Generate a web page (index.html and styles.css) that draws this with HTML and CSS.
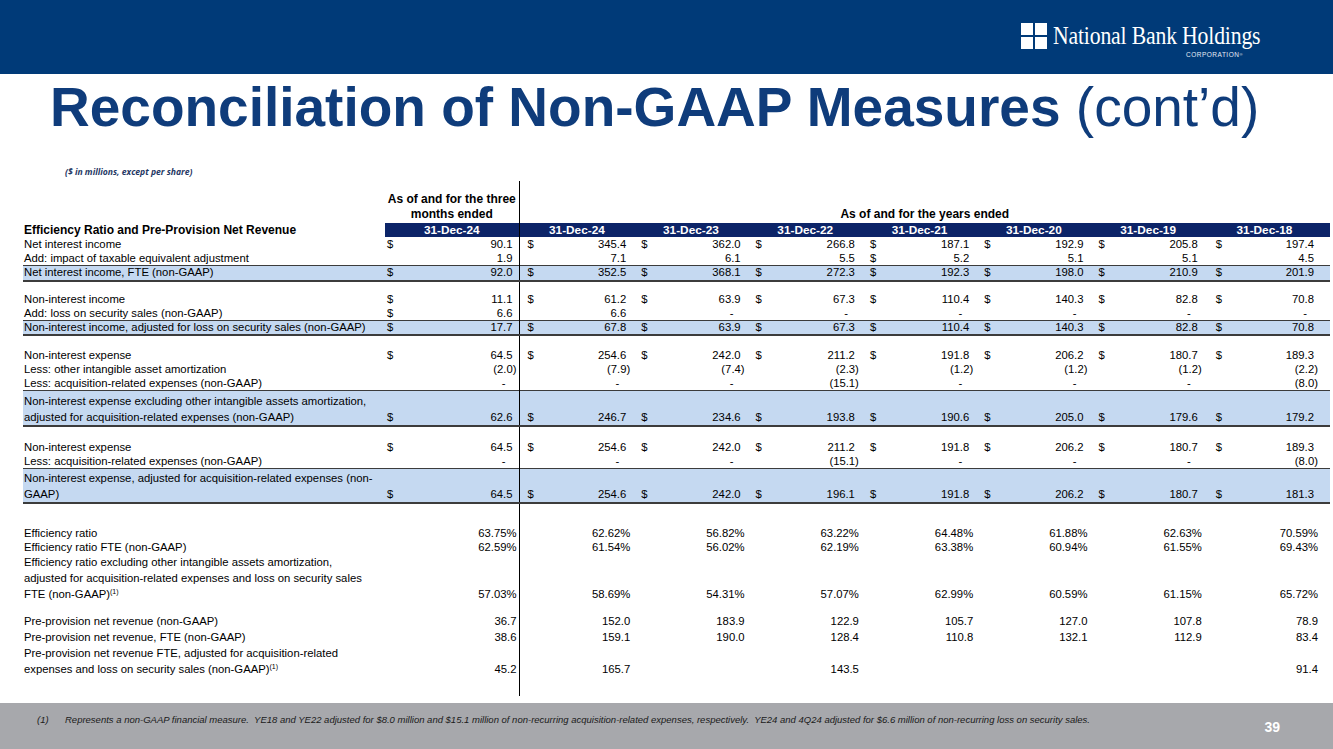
FILE: index.html
```html
<!DOCTYPE html>
<html lang="en">
<head>
<meta charset="utf-8">
<title>Reconciliation of Non-GAAP Measures (cont'd)</title>
<link rel="stylesheet" href="styles.css">
</head>
<body>
<header class="topbar">
  <div class="logo">
    <svg class="mark" width="26" height="26" viewBox="0 0 26 26" aria-hidden="true">
      <rect x="0" y="0" width="12" height="12" fill="#fff"/>
      <rect x="14" y="0" width="12" height="12" fill="#fff"/>
      <rect x="0" y="14" width="12" height="12" fill="#fff"/>
      <rect x="14" y="14" width="12" height="12" fill="#fff"/>
    </svg>
    <div class="brand">
      <div class="name">National Bank Holdings</div>
      <div class="corp">CORPORATION<sup>®</sup></div>
    </div>
  </div>
</header>

<main class="main">
  <h1 class="title">Reconciliation of Non-GAAP Measures <span class="light">(cont’d)</span></h1>
  <p class="unit">($ in millions, except per share)</p>

  <table class="fin">
    <colgroup>
      <col class="c-lab"><col class="c-q"><col class="c-y"><col class="c-y"><col class="c-y"><col class="c-y"><col class="c-y"><col class="c-y"><col class="c-y7">
    </colgroup>
    <tr class="top">
      <td></td>
      <td class="q hd">As of and for the three<br>months ended</td>
      <td class="y1 hd" colspan="7">As of and for the years ended</td>
    </tr>
    <tr class="r head">
      <td class="lab b">Efficiency Ratio and Pre-Provision Net Revenue</td>
      <td class="q nv">31-Dec-24</td>
      <td class="y y1 nv">31-Dec-24</td><td class="y nv">31-Dec-23</td><td class="y nv">31-Dec-22</td><td class="y nv">31-Dec-21</td><td class="y nv">31-Dec-20</td><td class="y nv">31-Dec-19</td><td class="y y7 nv">31-Dec-18</td>
    </tr>
    <tr class="r">
      <td class="lab">Net interest income</td>
      <td class="q"><span class="d">$</span><span class="p">90.1</span></td>
      <td class="y y1"><span class="d">$</span><span class="p">345.4</span></td>
      <td class="y"><span class="d">$</span><span class="p">362.0</span></td>
      <td class="y"><span class="d">$</span><span class="p">266.8</span></td>
      <td class="y"><span class="d">$</span><span class="p">187.1</span></td>
      <td class="y"><span class="d">$</span><span class="p">192.9</span></td>
      <td class="y"><span class="d">$</span><span class="p">205.8</span></td>
      <td class="y y7"><span class="d">$</span><span class="p">197.4</span></td>
    </tr>
    <tr class="r">
      <td class="lab">Add: impact of taxable equivalent adjustment</td>
      <td class="q"><span class="p">1.9</span></td>
      <td class="y y1"><span class="p">7.1</span></td>
      <td class="y"><span class="p">6.1</span></td>
      <td class="y"><span class="p">5.5</span></td>
      <td class="y"><span class="d">$</span><span class="p">5.2</span></td>
      <td class="y"><span class="p">5.1</span></td>
      <td class="y"><span class="p">5.1</span></td>
      <td class="y y7"><span class="p">4.5</span></td>
    </tr>
    <tr class="r hl">
      <td class="lab">Net interest income, FTE (non-GAAP)</td>
      <td class="q"><span class="d">$</span><span class="p">92.0</span></td>
      <td class="y y1"><span class="d">$</span><span class="p">352.5</span></td>
      <td class="y"><span class="d">$</span><span class="p">368.1</span></td>
      <td class="y"><span class="d">$</span><span class="p">272.3</span></td>
      <td class="y"><span class="d">$</span><span class="p">192.3</span></td>
      <td class="y"><span class="d">$</span><span class="p">198.0</span></td>
      <td class="y"><span class="d">$</span><span class="p">210.9</span></td>
      <td class="y y7"><span class="d">$</span><span class="p">201.9</span></td>
    </tr>
    <tr class="g g11"><td></td><td></td><td class="y1"></td><td></td><td></td><td></td><td></td><td></td><td></td></tr>
    <tr class="r">
      <td class="lab">Non-interest income</td>
      <td class="q"><span class="d">$</span><span class="p">11.1</span></td>
      <td class="y y1"><span class="d">$</span><span class="p">61.2</span></td>
      <td class="y"><span class="d">$</span><span class="p">63.9</span></td>
      <td class="y"><span class="d">$</span><span class="p">67.3</span></td>
      <td class="y"><span class="d">$</span><span class="p">110.4</span></td>
      <td class="y"><span class="d">$</span><span class="p">140.3</span></td>
      <td class="y"><span class="d">$</span><span class="p">82.8</span></td>
      <td class="y y7"><span class="d">$</span><span class="p">70.8</span></td>
    </tr>
    <tr class="r">
      <td class="lab">Add: loss on security sales (non-GAAP)</td>
      <td class="q"><span class="d">$</span><span class="p">6.6</span></td>
      <td class="y y1"><span class="p">6.6</span></td>
      <td class="y"><span class="z">-</span></td>
      <td class="y"><span class="z">-</span></td>
      <td class="y"><span class="z">-</span></td>
      <td class="y"><span class="z">-</span></td>
      <td class="y"><span class="z">-</span></td>
      <td class="y y7"><span class="z">-</span></td>
    </tr>
    <tr class="r hl">
      <td class="lab">Non-interest income, adjusted for loss on security sales (non-GAAP)</td>
      <td class="q"><span class="d">$</span><span class="p">17.7</span></td>
      <td class="y y1"><span class="d">$</span><span class="p">67.8</span></td>
      <td class="y"><span class="d">$</span><span class="p">63.9</span></td>
      <td class="y"><span class="d">$</span><span class="p">67.3</span></td>
      <td class="y"><span class="d">$</span><span class="p">110.4</span></td>
      <td class="y"><span class="d">$</span><span class="p">140.3</span></td>
      <td class="y"><span class="d">$</span><span class="p">82.8</span></td>
      <td class="y y7"><span class="d">$</span><span class="p">70.8</span></td>
    </tr>
    <tr class="g g13"><td></td><td></td><td class="y1"></td><td></td><td></td><td></td><td></td><td></td><td></td></tr>
    <tr class="r">
      <td class="lab">Non-interest expense</td>
      <td class="q"><span class="d">$</span><span class="p">64.5</span></td>
      <td class="y y1"><span class="d">$</span><span class="p">254.6</span></td>
      <td class="y"><span class="d">$</span><span class="p">242.0</span></td>
      <td class="y"><span class="d">$</span><span class="p">211.2</span></td>
      <td class="y"><span class="d">$</span><span class="p">191.8</span></td>
      <td class="y"><span class="d">$</span><span class="p">206.2</span></td>
      <td class="y"><span class="d">$</span><span class="p">180.7</span></td>
      <td class="y y7"><span class="d">$</span><span class="p">189.3</span></td>
    </tr>
    <tr class="r">
      <td class="lab">Less: other intangible asset amortization</td>
      <td class="q">(2.0)</td>
      <td class="y y1">(7.9)</td>
      <td class="y">(7.4)</td>
      <td class="y">(2.3)</td>
      <td class="y">(1.2)</td>
      <td class="y">(1.2)</td>
      <td class="y">(1.2)</td>
      <td class="y y7">(2.2)</td>
    </tr>
    <tr class="r">
      <td class="lab">Less: acquisition-related expenses (non-GAAP)</td>
      <td class="q"><span class="z">-</span></td>
      <td class="y y1"><span class="z">-</span></td>
      <td class="y"><span class="z">-</span></td>
      <td class="y">(15.1)</td>
      <td class="y"><span class="z">-</span></td>
      <td class="y"><span class="z">-</span></td>
      <td class="y"><span class="z">-</span></td>
      <td class="y y7">(8.0)</td>
    </tr>
    <tr class="hl two">
      <td class="lab">Non-interest expense excluding other intangible assets amortization,<br>adjusted for acquisition-related expenses (non-GAAP)</td>
      <td class="q"><span class="d">$</span><span class="p">62.6</span></td>
      <td class="y y1"><span class="d">$</span><span class="p">246.7</span></td>
      <td class="y"><span class="d">$</span><span class="p">234.6</span></td>
      <td class="y"><span class="d">$</span><span class="p">193.8</span></td>
      <td class="y"><span class="d">$</span><span class="p">190.6</span></td>
      <td class="y"><span class="d">$</span><span class="p">205.0</span></td>
      <td class="y"><span class="d">$</span><span class="p">179.6</span></td>
      <td class="y y7"><span class="d">$</span><span class="p">179.2</span></td>
    </tr>
    <tr class="g g14"><td></td><td></td><td class="y1"></td><td></td><td></td><td></td><td></td><td></td><td></td></tr>
    <tr class="r">
      <td class="lab">Non-interest expense</td>
      <td class="q"><span class="d">$</span><span class="p">64.5</span></td>
      <td class="y y1"><span class="d">$</span><span class="p">254.6</span></td>
      <td class="y"><span class="d">$</span><span class="p">242.0</span></td>
      <td class="y"><span class="d">$</span><span class="p">211.2</span></td>
      <td class="y"><span class="d">$</span><span class="p">191.8</span></td>
      <td class="y"><span class="d">$</span><span class="p">206.2</span></td>
      <td class="y"><span class="d">$</span><span class="p">180.7</span></td>
      <td class="y y7"><span class="d">$</span><span class="p">189.3</span></td>
    </tr>
    <tr class="r">
      <td class="lab">Less: acquisition-related expenses (non-GAAP)</td>
      <td class="q"><span class="z">-</span></td>
      <td class="y y1"><span class="z">-</span></td>
      <td class="y"><span class="z">-</span></td>
      <td class="y">(15.1)</td>
      <td class="y"><span class="z">-</span></td>
      <td class="y"><span class="z">-</span></td>
      <td class="y"><span class="z">-</span></td>
      <td class="y y7">(8.0)</td>
    </tr>
    <tr class="hl two">
      <td class="lab">Non-interest expense, adjusted for acquisition-related expenses (non-<br>GAAP)</td>
      <td class="q"><span class="d">$</span><span class="p">64.5</span></td>
      <td class="y y1"><span class="d">$</span><span class="p">254.6</span></td>
      <td class="y"><span class="d">$</span><span class="p">242.0</span></td>
      <td class="y"><span class="d">$</span><span class="p">196.1</span></td>
      <td class="y"><span class="d">$</span><span class="p">191.8</span></td>
      <td class="y"><span class="d">$</span><span class="p">206.2</span></td>
      <td class="y"><span class="d">$</span><span class="p">180.7</span></td>
      <td class="y y7"><span class="d">$</span><span class="p">181.3</span></td>
    </tr>
    <tr class="g g23"><td></td><td></td><td class="y1"></td><td></td><td></td><td></td><td></td><td></td><td></td></tr>
    <tr class="r">
      <td class="lab">Efficiency ratio</td>
      <td class="q">63.75%</td>
      <td class="y y1">62.62%</td>
      <td class="y">56.82%</td>
      <td class="y">63.22%</td>
      <td class="y">64.48%</td>
      <td class="y">61.88%</td>
      <td class="y">62.63%</td>
      <td class="y y7">70.59%</td>
    </tr>
    <tr class="r">
      <td class="lab">Efficiency ratio FTE (non-GAAP)</td>
      <td class="q">62.59%</td>
      <td class="y y1">61.54%</td>
      <td class="y">56.02%</td>
      <td class="y">62.19%</td>
      <td class="y">63.38%</td>
      <td class="y">60.94%</td>
      <td class="y">61.55%</td>
      <td class="y y7">69.43%</td>
    </tr>
    <tr class="multi">
      <td class="lab">Efficiency ratio excluding other intangible assets amortization,<br>adjusted for acquisition-related expenses and loss on security sales<br>FTE (non-GAAP)<sup class="fn">(1)</sup></td>
      <td class="q">57.03%</td>
      <td class="y y1">58.69%</td>
      <td class="y">54.31%</td>
      <td class="y">57.07%</td>
      <td class="y">62.99%</td>
      <td class="y">60.59%</td>
      <td class="y">61.15%</td>
      <td class="y y7">65.72%</td>
    </tr>
    <tr class="g g11"><td></td><td></td><td class="y1"></td><td></td><td></td><td></td><td></td><td></td><td></td></tr>
    <tr class="r16">
      <td class="lab">Pre-provision net revenue (non-GAAP)</td>
      <td class="q">36.7</td>
      <td class="y y1">152.0</td>
      <td class="y">183.9</td>
      <td class="y">122.9</td>
      <td class="y">105.7</td>
      <td class="y">127.0</td>
      <td class="y">107.8</td>
      <td class="y y7">78.9</td>
    </tr>
    <tr class="r16">
      <td class="lab">Pre-provision net revenue, FTE (non-GAAP)</td>
      <td class="q">38.6</td>
      <td class="y y1">159.1</td>
      <td class="y">190.0</td>
      <td class="y">128.4</td>
      <td class="y">110.8</td>
      <td class="y">132.1</td>
      <td class="y">112.9</td>
      <td class="y y7">83.4</td>
    </tr>
    <tr class="multi">
      <td class="lab">Pre-provision net revenue FTE, adjusted for acquisition-related<br>expenses and loss on security sales (non-GAAP)<sup class="fn">(1)</sup></td>
      <td class="q">45.2</td>
      <td class="y y1">165.7</td>
      <td class="y"></td>
      <td class="y">143.5</td>
      <td class="y"></td>
      <td class="y"></td>
      <td class="y"></td>
      <td class="y y7">91.4</td>
    </tr>
    <tr class="g g19"><td></td><td></td><td class="y1"></td><td></td><td></td><td></td><td></td><td></td><td></td></tr>
  </table>
</main>

<footer class="foot">
  <div class="note">
    <span class="nref">(1)</span>
    <span class="ntext">Represents a non-GAAP financial measure.&nbsp; YE18 and YE22 adjusted for $8.0 million and $15.1 million of non-recurring acquisition-related expenses, respectively.&nbsp; YE24 and 4Q24 adjusted for $6.6 million of non-recurring loss on security sales.</span>
  </div>
  <div class="page">39</div>
</footer>
</body>
</html>
```

FILE: styles.css
```css
* { box-sizing: border-box; }

html, body {
  margin: 0;
  padding: 0;
}

body {
  width: 1333px;
  height: 749px;
  overflow: hidden;
  display: flex;
  flex-direction: column;
  background: #ffffff;
  font-family: "Liberation Sans", Arial, sans-serif;
  color: #000;
}

/* ---------- top bar ---------- */
.topbar {
  height: 74px;
  flex: none;
  background: #003a78;
  padding: 23px 0 0 1021px;
}

.logo {
  display: flex;
  align-items: flex-start;
  gap: 6px;
}

.mark { display: block; flex: none; }

.brand {
  display: flex;
  flex-direction: column;
}

.name {
  font-family: "Liberation Serif", "Times New Roman", serif;
  font-size: 26px;
  line-height: 26px;
  color: #fff;
  white-space: nowrap;
  transform: scaleX(0.835);
  transform-origin: left top;
  letter-spacing: -0.2px;
}

.corp {
  margin: 2px 0 0 133px;
  font-size: 6.5px;
  line-height: 7px;
  letter-spacing: 0.5px;
  color: #e6ecf5;
  white-space: nowrap;
}

.corp sup {
  font-size: 4px;
  vertical-align: top;
}

/* ---------- main ---------- */
.main {
  flex: 1;
}

.title {
  margin: 6px 0 0;
  padding-left: 50px;
  font-size: 55px;
  line-height: 55px;
  font-weight: bold;
  color: #0f3c7b;
  white-space: nowrap;
}

.title .light { font-weight: normal; }

.unit {
  margin: 31px 0 0 65px;
  font-family: "Open Sans", "Liberation Sans", sans-serif;
  font-style: italic;
  font-weight: bold;
  font-size: 8.6px;
  line-height: 12px;
  color: #1f3864;
}

/* ---------- table ---------- */
.fin {
  margin: 3px 0 0 23px;
  width: 1307px;
  table-layout: fixed;
  border-collapse: collapse;
  font-size: 11.3px;
  line-height: 14px;
}

.c-lab { width: 362px; }
.c-q { width: 134px; }
.c-y { width: 114.3px; }
.c-y7 { width: 125.2px; }

.fin td {
  padding: 0;
  white-space: nowrap;
  vertical-align: middle;
}

.fin .lab { padding-left: 1px; }
.fin .b { font-weight: bold; font-size: 12px; }

.fin .q {
  text-align: right;
  padding-left: 2px;
  padding-right: 2px;
}

.fin .y {
  text-align: right;
  padding-left: 8px;
  padding-right: 3px;
}

.fin .y7 {
  padding-left: 11px;
  padding-right: 12px;
}

.fin .y1 { border-left: 1px solid #000; }

.d { float: left; }
.p { padding-right: 4px; }
.z { padding-right: 11px; }

/* header rows */
.top td { height: 42px; vertical-align: bottom; }

.fin .hd {
  font-weight: bold;
  font-size: 12px;
  line-height: 15px;
  text-align: center;
  padding: 0 0 1px;
}

.head td { height: 14px; }

.fin .nv {
  background: #0c2468;
  color: #fff;
  font-weight: bold;
  font-size: 11.8px;
  text-align: center;
}

.fin .y.nv { padding-left: 8px; padding-right: 7px; }
.fin .y7.nv { padding-left: 8px; padding-right: 14px; }

.r td { height: 14px; }
.r16 td { height: 16px; line-height: 16px; }

.hl td {
  background: #c5d9f1;
  border-top: 1px solid #3c3c3c;
  border-bottom: 2px solid #3c3c3c;
}

.r.hl td { height: 15px; line-height: 13px; }

.two td {
  height: 35px;
  line-height: 16px;
  vertical-align: bottom;
}

.multi td {
  line-height: 16px;
  vertical-align: bottom;
}

.fn {
  font-size: 7px;
  line-height: 0;
  vertical-align: 4px;
}

.g td { padding: 0; }
.g11 td { height: 11px; }
.g13 td { height: 13px; }
.g14 td { height: 14px; }
.g19 td { height: 19px; }
.g23 td { height: 23px; }

/* ---------- footer ---------- */
.foot {
  flex: none;
  height: 46px;
  background: #a7a8ac;
  display: flex;
  align-items: flex-start;
  padding: 11px 53px 0 37px;
}

.note {
  flex: 1;
  display: flex;
  font-style: italic;
  font-size: 9.5px;
  line-height: 12px;
  color: #1a1a1a;
  white-space: nowrap;
}

.nref { width: 28px; flex: none; }

.page {
  margin-top: 5px;
  font-size: 14px;
  line-height: 16px;
  font-weight: bold;
  color: #fff;
}
```
